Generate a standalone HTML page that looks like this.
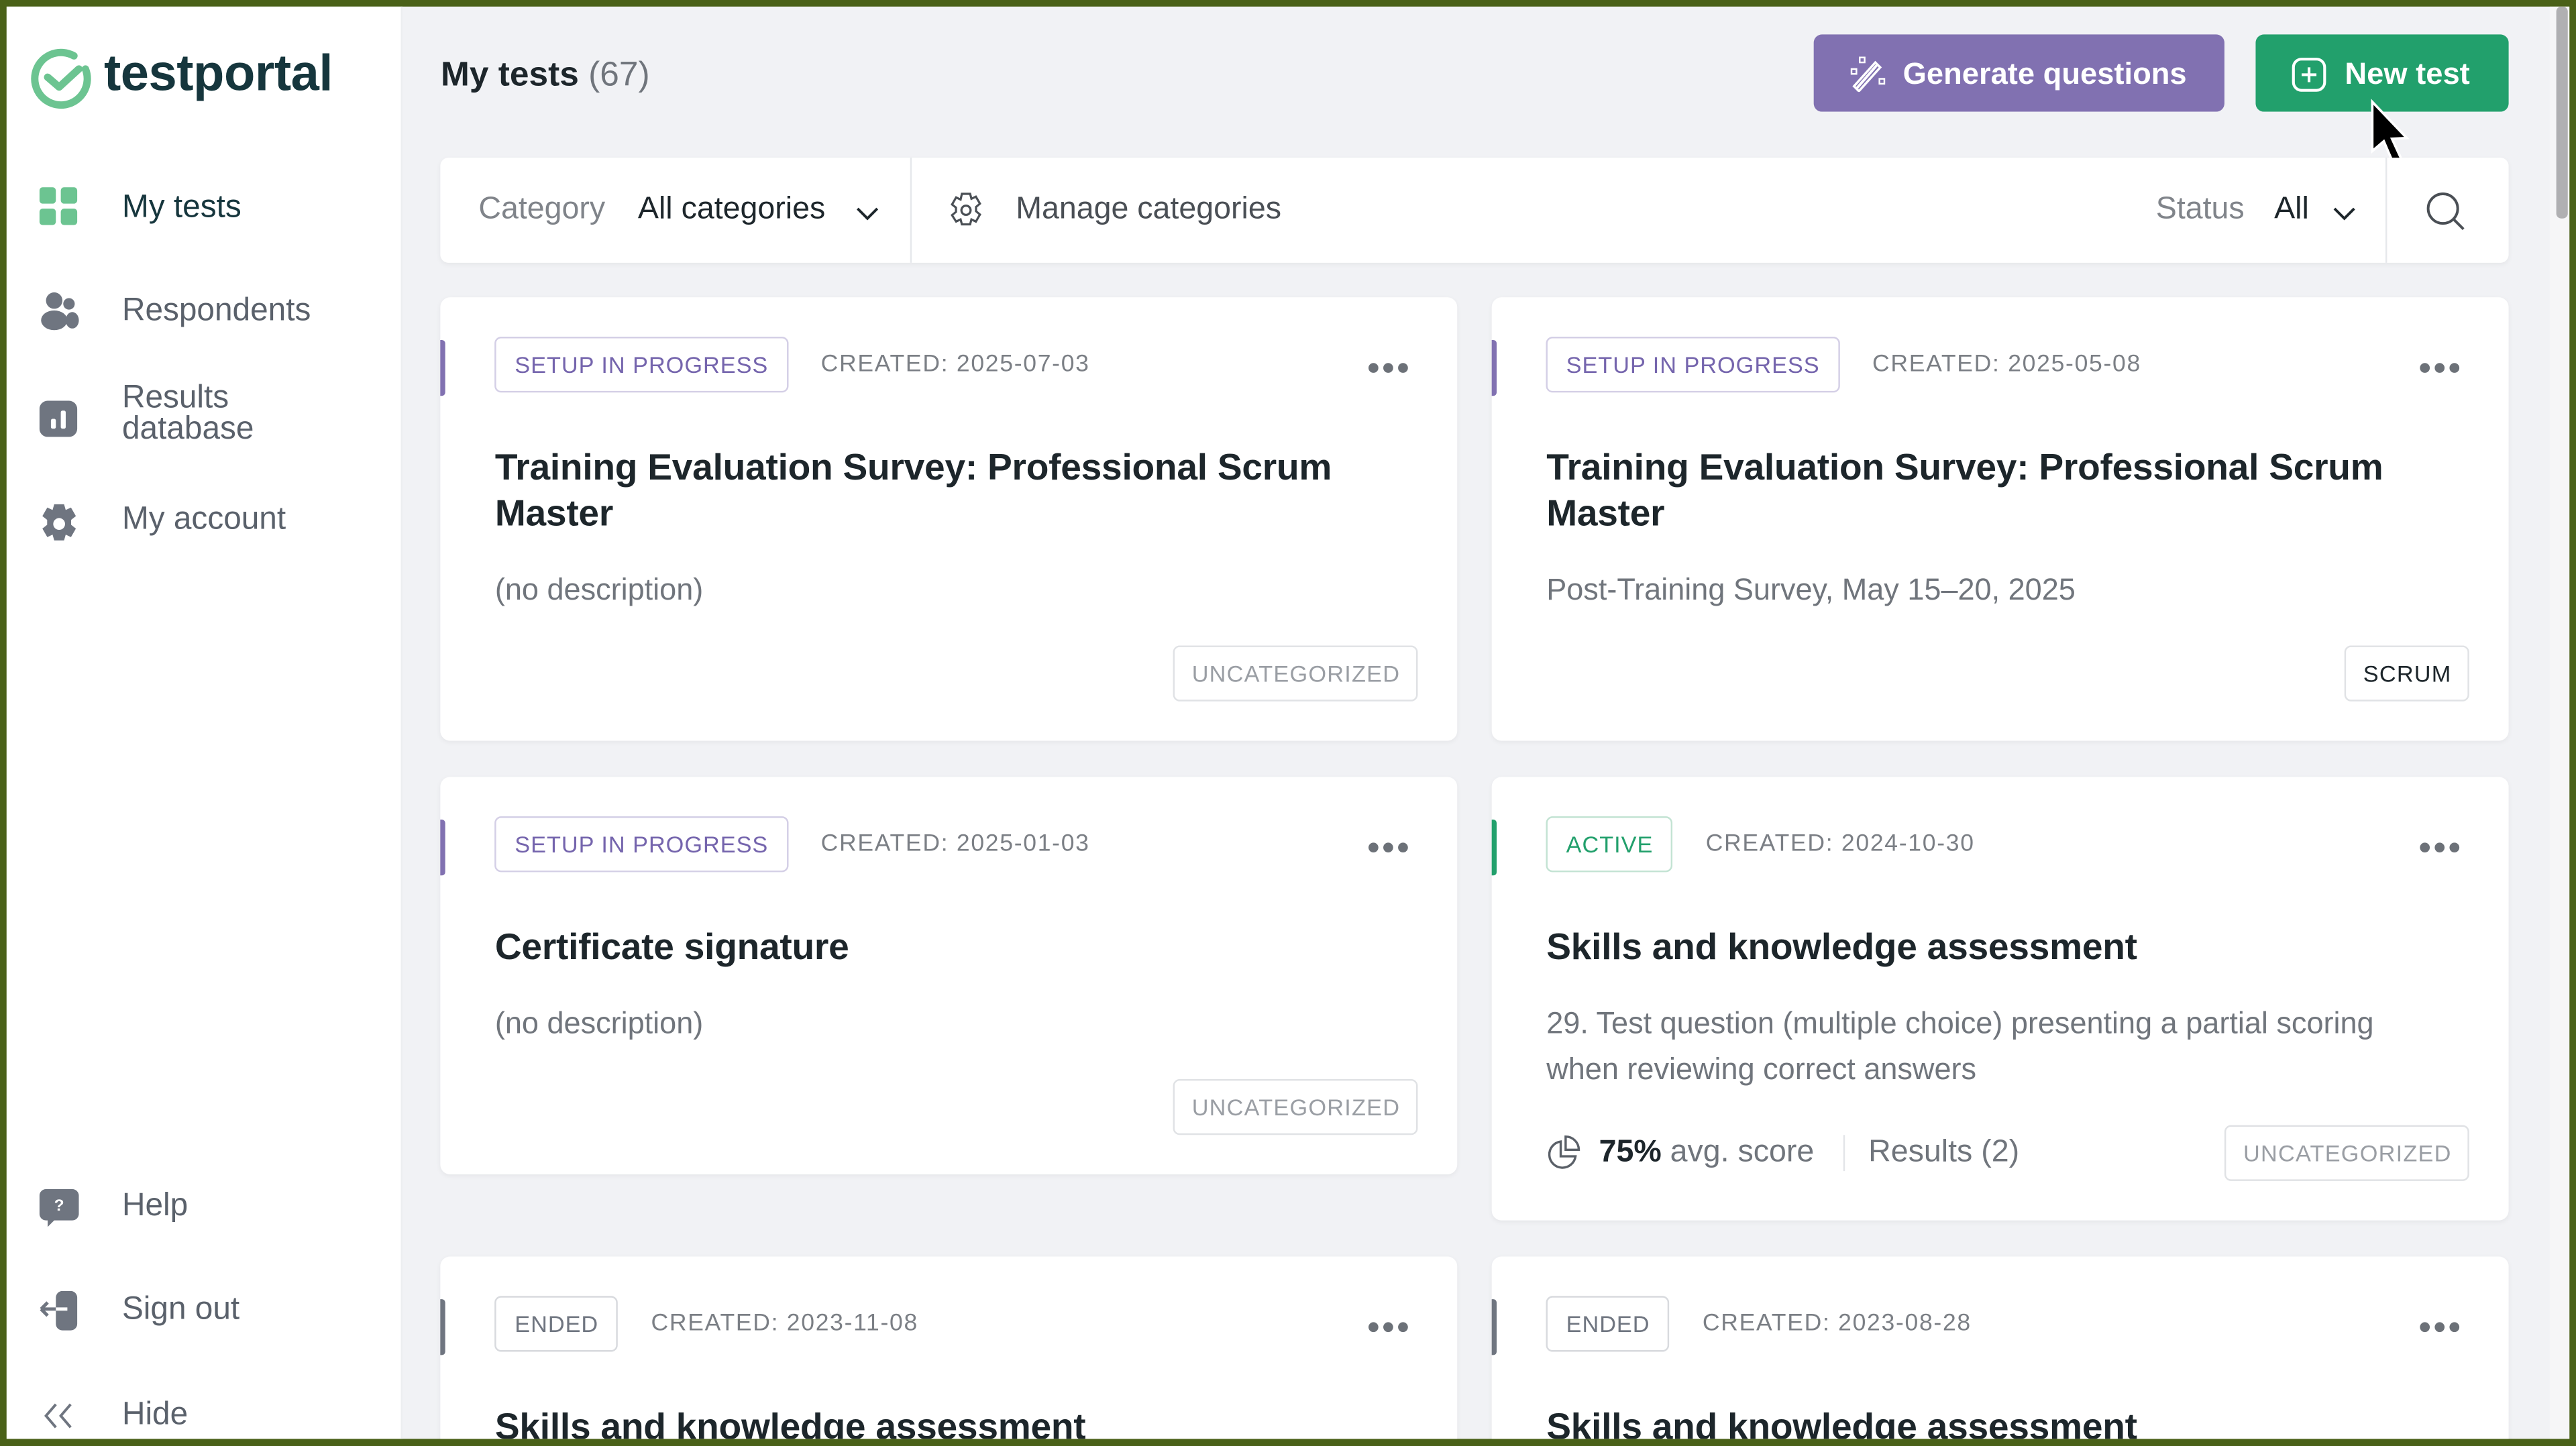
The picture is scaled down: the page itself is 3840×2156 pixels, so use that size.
<!DOCTYPE html>
<html><head><meta charset="utf-8">
<style>
*{box-sizing:border-box;margin:0;padding:0}
html,body{width:3840px;height:2156px;overflow:hidden;background:#4a6118}
#w{position:absolute;left:0;top:0;width:1568px;height:880.4px;transform:scale(2.44898);transform-origin:0 0;background:#4a6118;font-family:"Liberation Sans",sans-serif;overflow:hidden}
#app{position:absolute;left:4.3px;top:3.5px;width:1559.5px;height:872.5px;background:#f1f2f5;overflow:hidden}
.abs{position:absolute}
#side{position:absolute;left:0;top:0;width:241px;height:100%;background:#fff;border-right:1px solid #eceef0}
.nav{position:absolute;left:70px;font-size:19.5px;color:#5a616b}
.ic{position:absolute;left:20px}
.card{position:absolute;background:#fff;border-radius:6px;box-shadow:0 1px 3px rgba(0,0,0,.05);padding:24px 0 0 33px}
.bar{position:absolute;left:0;top:26px;width:3px;height:34px;border-radius:0 2px 2px 0}
.row{height:34px;display:flex;align-items:center}
.tag{height:34px;border:1.5px solid #d8dade;border-radius:4px;padding:0 11px;display:flex;align-items:center;font-size:14px;letter-spacing:.4px}
.cr{margin-left:20px;font-size:14.5px;color:#7b7f85;letter-spacing:.7px}
.dots{position:absolute;right:30px;top:40px;display:flex;gap:3px}
.dots i{width:6px;height:6px;border-radius:50%;background:#6c7178;display:block}
.t{margin-top:32px;font-size:22.5px;font-weight:bold;line-height:28px;color:#1d262b;padding-right:30px;letter-spacing:-.1px}
.d{margin-top:18px;font-size:18.4px;line-height:28px;color:#70757c;padding-right:50px}
.cat{position:absolute;right:24px;bottom:24px;height:34px;border:1.5px solid #e0e2e5;border-radius:4px;padding:0 10px;display:flex;align-items:center;font-size:14px;letter-spacing:.5px;color:#9a9ea4}
</style></head><body>
<div id="w"><div id="app">
<div id="side">
 <svg class="abs" style="left:14px;top:24px" width="40" height="40" viewBox="0 0 40 40"><path d="M27 6 A16 16 0 1 0 34 14" fill="none" stroke="#6cc491" stroke-width="4.5" stroke-linecap="round"/><path d="M11 19 L18 25 L30 14" fill="none" stroke="#6cc491" stroke-width="4.5" stroke-linecap="round" stroke-linejoin="round"/></svg>
 <div class="abs" style="left:59px;top:23px;font-size:31px;font-weight:bold;color:#16363d;letter-spacing:-.2px">testportal</div>

 <svg class="ic" style="top:110px" width="24" height="24"><rect x="0" y="0" width="10" height="10" rx="2" fill="#6cc491"/><rect x="13" y="0" width="10" height="10" rx="2" fill="#6cc491"/><rect x="0" y="13" width="10" height="10" rx="2" fill="#6cc491"/><rect x="13" y="13" width="10" height="10" rx="2" fill="#6cc491"/></svg>
 <div class="nav" style="top:111px;color:#16363d">My tests</div>

 <svg class="ic" style="top:173px" width="26" height="26"><circle cx="9" cy="6" r="5" fill="#6f7580"/><ellipse cx="9" cy="18" rx="8" ry="6" fill="#6f7580"/><circle cx="18" cy="8" r="3.5" fill="#6f7580"/><ellipse cx="20" cy="18" rx="4" ry="5" fill="#6f7580"/></svg>
 <div class="nav" style="top:174px">Respondents</div>

 <svg class="ic" style="top:240px" width="24" height="24"><rect x="0" y="0" width="23" height="22" rx="5" fill="#6f7580"/><rect x="7" y="11" width="3" height="6" rx="1" fill="#fff"/><rect x="13" y="6" width="3" height="11" rx="1" fill="#fff"/></svg>
 <div class="nav" style="top:229px;line-height:19px">Results<br>database</div>

 <svg class="ic" style="top:302px" width="24" height="26" viewBox="0 0 24 26"><path d="M9 1h6l1 3.5 3.2-1.5 3 5.2-2.9 2.3v3l2.9 2.3-3 5.2-3.2-1.5-1 3.5H9l-1-3.5-3.2 1.5-3-5.2 2.9-2.3v-3L1.8 8.2l3-5.2L8 4.5z" fill="#6f7580"/><circle cx="12" cy="13" r="3.6" fill="#fff"/></svg>
 <div class="nav" style="top:301px">My account</div>

 <svg class="ic" style="top:720px" width="24" height="26"><path d="M4 0h16a4 4 0 0 1 4 4v11a4 4 0 0 1-4 4H9l-4 4v-4H4a4 4 0 0 1-4-4V4a4 4 0 0 1 4-4z" fill="#6f7580"/><text x="12" y="13" font-size="10" font-weight="bold" fill="#fff" text-anchor="middle" font-family="Liberation Sans">?</text></svg>
 <div class="nav" style="top:719px">Help</div>

 <svg class="ic" style="top:782px" width="26" height="26"><rect x="10" y="0" width="13" height="24" rx="4" fill="#6f7580"/><path d="M1 11h16M1 11l4-4M1 11l4 4" stroke="#6f7580" stroke-width="2" fill="none"/><path d="M10 11h7" stroke="#fff" stroke-width="2"/></svg>
 <div class="nav" style="top:782px">Sign out</div>

 <svg class="ic" style="top:849px" width="24" height="18"><path d="M10 2 4 9l6 7M19 2l-6 7 6 7" stroke="#6f7580" stroke-width="1.6" fill="none"/></svg>
 <div class="nav" style="top:846px">Hide</div>
</div>

<div class="abs" style="left:264px;top:30px;font-size:21px;color:#1d262b;font-weight:bold">My tests <span style="font-weight:normal;color:#70757c">(67)</span></div>

<div class="abs" style="left:1100px;top:17.5px;width:250px;height:47px;background:#8171b1;border-radius:5px;color:#fff;font-size:18.5px;font-weight:bold;display:flex;align-items:center;padding-left:54px">Generate questions</div>
<svg class="abs" style="left:1122px;top:30px" width="22" height="22"><path d="M4 20 17 5" stroke="#fff" stroke-width="1.6"/><path d="M2.5 18.5l3 3 13-14.5-3-3z" fill="none" stroke="#fff" stroke-width="1.4"/><rect x="6" y="1" width="3" height="3" fill="none" stroke="#fff" stroke-width="1"/><rect x="1" y="8" width="3" height="3" fill="none" stroke="#fff" stroke-width="1"/><rect x="18" y="14" width="3" height="3" fill="none" stroke="#fff" stroke-width="1"/></svg>

<div class="abs" style="left:1369px;top:17.5px;width:154px;height:47px;background:#22a06c;border-radius:5px;color:#fff;font-size:18.5px;font-weight:bold;display:flex;align-items:center;padding-left:54px">New test</div>
<svg class="abs" style="left:1391px;top:31px" width="22" height="22"><rect x="1" y="1" width="19" height="19" rx="5" fill="none" stroke="#fff" stroke-width="1.7"/><path d="M10.5 6v9M6 10.5h9" stroke="#fff" stroke-width="1.7"/></svg>
<svg class="abs" style="left:1436px;top:56px" width="30" height="46"><path d="M4 2 L4 32 L11 26 L17 40 L22 37.5 L16 24.5 L25 24 Z" fill="#000" stroke="#fff" stroke-width="1.5"/></svg>

<div class="abs" style="left:264px;top:92.5px;width:1259px;height:64px;background:#fff;border-radius:5px;box-shadow:0 1px 3px rgba(0,0,0,.05)">
 <div class="abs" style="left:23px;top:21px;font-size:19px;color:#80848a">Category</div>
 <div class="abs" style="left:120px;top:21px;font-size:19px;color:#1d262b">All categories</div>
 <svg class="abs" style="left:253px;top:29px" width="14" height="10"><path d="M1 2l6 6 6-6" stroke="#1d262b" stroke-width="1.6" fill="none"/></svg>
 <div class="abs" style="left:286px;top:0;width:1px;height:64px;background:#e6e8eb"></div>
 <svg class="abs" style="left:308px;top:20px" width="24" height="24" viewBox="0 0 24 24"><path d="M9.5 2h5l.8 3 2.7-1.3 2.5 4.3-2.4 2v2.6l2.4 2-2.5 4.3-2.7-1.3-.8 3h-5l-.8-3-2.7 1.3L3.5 15l2.4-2v-2.6L3.5 8.5 6 4.2 8.7 5.5z" fill="none" stroke="#4a4f55" stroke-width="1.3"/><circle cx="12" cy="12" r="2.8" fill="none" stroke="#4a4f55" stroke-width="1.3"/></svg>
 <div class="abs" style="left:350px;top:21px;font-size:19px;color:#4a4f55">Manage categories</div>
 <div class="abs" style="left:1044px;top:21px;font-size:19px;color:#80848a">Status</div>
 <div class="abs" style="left:1116px;top:21px;font-size:19px;color:#1d262b">All</div>
 <svg class="abs" style="left:1152px;top:29px" width="14" height="10"><path d="M1 2l6 6 6-6" stroke="#1d262b" stroke-width="1.6" fill="none"/></svg>
 <div class="abs" style="left:1184px;top:0;width:1px;height:64px;background:#e6e8eb"></div>
 <svg class="abs" style="left:1208px;top:20px" width="26" height="26"><circle cx="11" cy="11" r="9" fill="none" stroke="#4a4f55" stroke-width="1.6"/><path d="M17.5 17.5l6 6" stroke="#4a4f55" stroke-width="1.6"/></svg>
</div>

<div class="card" style="left:264px;top:177.5px;width:619px;height:270px">
 <div class="bar" style="background:#8171b1"></div>
 <div class="row"><div class="tag" style="color:#7565ad;border-color:#d4cfe6">SETUP IN PROGRESS</div><div class="cr">CREATED: 2025-07-03</div></div>
 <div class="dots"><i></i><i></i><i></i></div>
 <div class="t">Training Evaluation Survey: Professional Scrum Master</div>
 <div class="d">(no description)</div>
 <div class="cat">UNCATEGORIZED</div>
</div>
<div class="card" style="left:904px;top:177.5px;width:619px;height:270px">
 <div class="bar" style="background:#8171b1"></div>
 <div class="row"><div class="tag" style="color:#7565ad;border-color:#d4cfe6">SETUP IN PROGRESS</div><div class="cr">CREATED: 2025-05-08</div></div>
 <div class="dots"><i></i><i></i><i></i></div>
 <div class="t">Training Evaluation Survey: Professional Scrum Master</div>
 <div class="d">Post-Training Survey, May 15–20, 2025</div>
 <div class="cat" style="color:#1d262b">SCRUM</div>
</div>
<div class="card" style="left:264px;top:469.5px;width:619px;height:242px">
 <div class="bar" style="background:#8171b1"></div>
 <div class="row"><div class="tag" style="color:#7565ad;border-color:#d4cfe6">SETUP IN PROGRESS</div><div class="cr">CREATED: 2025-01-03</div></div>
 <div class="dots"><i></i><i></i><i></i></div>
 <div class="t">Certificate signature</div>
 <div class="d">(no description)</div>
 <div class="cat">UNCATEGORIZED</div>
</div>
<div class="card" style="left:904px;top:469.5px;width:619px;height:270px">
 <div class="bar" style="background:#22a06c"></div>
 <div class="row"><div class="tag" style="color:#22a06c;border-color:#c3e3d3">ACTIVE</div><div class="cr">CREATED: 2024-10-30</div></div>
 <div class="dots"><i></i><i></i><i></i></div>
 <div class="t">Skills and knowledge assessment</div>
 <div class="d">29. Test question (multiple choice) presenting a partial scoring when reviewing correct answers</div>
 <div class="abs" style="left:33px;top:218px;display:flex;align-items:center;font-size:19px;color:#70757c">
  <svg width="22" height="22" style="margin-right:10px"><path d="M9 4 A8 8 0 1 0 18 13 L9 13 Z" fill="none" stroke="#5a6068" stroke-width="1.4"/><path d="M12 1 A8 8 0 0 1 20 9 L12 9 Z" fill="none" stroke="#5a6068" stroke-width="1.4"/></svg>
  <b style="color:#1d262b">75%</b>&nbsp;avg. score
  <span style="display:inline-block;width:1px;height:22px;background:#e3e5e8;margin:0 14px 0 18px"></span>Results (2)
 </div>
 <div class="cat">UNCATEGORIZED</div>
</div>
<div class="card" style="left:264px;top:761.5px;width:619px;height:120px">
 <div class="bar" style="background:#6f7580"></div>
 <div class="row"><div class="tag" style="color:#6f7580">ENDED</div><div class="cr">CREATED: 2023-11-08</div></div>
 <div class="dots"><i></i><i></i><i></i></div>
 <div class="t">Skills and knowledge assessment</div>
</div>
<div class="card" style="left:904px;top:761.5px;width:619px;height:120px">
 <div class="bar" style="background:#6f7580"></div>
 <div class="row"><div class="tag" style="color:#6f7580">ENDED</div><div class="cr">CREATED: 2023-08-28</div></div>
 <div class="dots"><i></i><i></i><i></i></div>
 <div class="t">Skills and knowledge assessment</div>
</div>

<div class="abs" style="left:1547.5px;top:0;width:12px;height:100%;background:#f6f6f7"></div>
<div class="abs" style="left:1551.5px;top:0;width:7px;height:129px;background:#b0b0b2;border-radius:3px"></div>
</div></div>
</body></html>
